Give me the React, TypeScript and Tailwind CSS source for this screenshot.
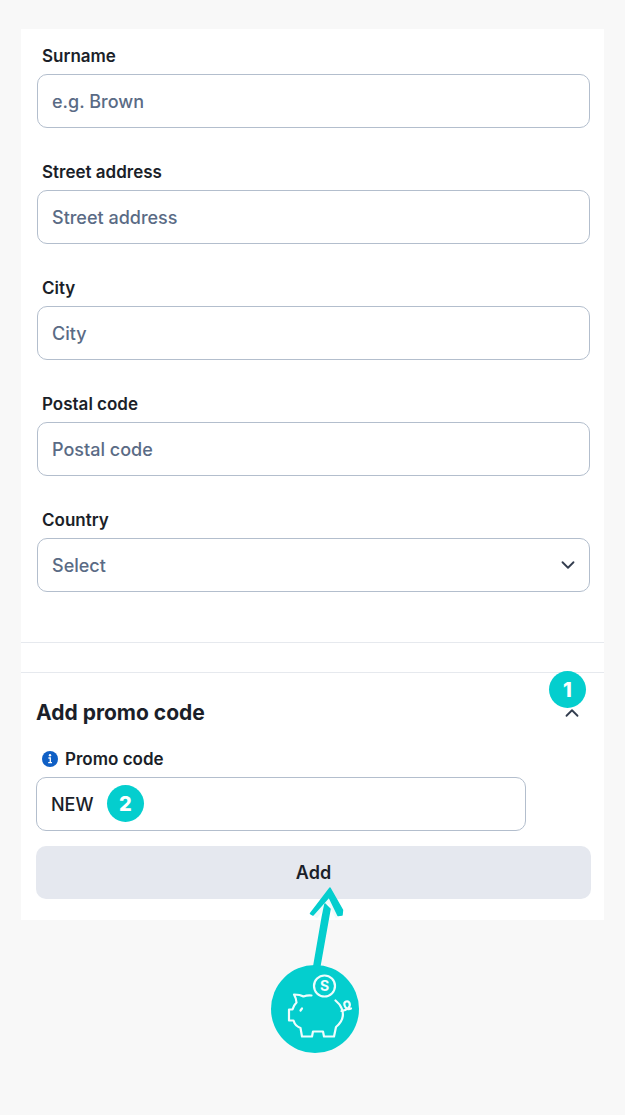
import { useState } from "react";
import { ChevronDown, ChevronUp } from "lucide-react";

const textFields = [
  { id: "surname", label: "Surname", placeholder: "e.g. Brown" },
  { id: "street", label: "Street address", placeholder: "Street address" },
  { id: "city", label: "City", placeholder: "City" },
  { id: "postal", label: "Postal code", placeholder: "Postal code" },
];

const labelClass = "block px-[5px] text-[17px] leading-6 font-semibold text-[#1b1f29]";
const controlClass =
  "block h-[54px] w-full rounded-[10px] border border-[#b3becd] bg-white px-3.5 text-[18px] font-medium outline-none";
const badgeClass =
  "absolute flex size-[37px] items-center justify-center rounded-full bg-[#04cece] text-[20px] font-extrabold text-white";

function InfoIcon() {
  return (
    <svg viewBox="0 0 16 16" className="size-4" aria-hidden="true">
      <circle cx="8" cy="8" r="8" fill="#0f5fc5" />
      <circle cx="8" cy="4.3" r="1.2" fill="#fff" />
      <path d="M6.4 7h1.9v4.4M6.2 11.6h3.8" stroke="#fff" strokeWidth="1.3" fill="none" />
    </svg>
  );
}

function PiggyPointer() {
  return (
    <svg viewBox="0 0 88 167" className="relative h-[167px] w-[88px]" role="img" aria-label="Save with a promo code">
      {/* Arrow */}
      <path d="M44 31 L57.500 13 L67 31" fill="none" stroke="#effbfb" strokeWidth="5" />
      <g fill="#04cece" stroke="#04cece" strokeWidth="1.5" strokeLinejoin="round">
        <path d="M59 2 L71.500 24 L71 29 L67 29.500 L58 11 L42 29 L39.500 27.500 Z" />
        <path d="M54 18 L59 23 L48.500 82 L42.500 82 L51.500 30 Z" />
      </g>
      <circle cx="44" cy="123" r="44" fill="#04cece" />
      {/* Pig and coin */}
      <g fill="none" stroke="#effdfd" strokeWidth="2.2" strokeLinecap="round" strokeLinejoin="round">
        <circle cx="53.500" cy="100" r="10.500" />
        <path d="M40.500 109.500c-3-.3-5.500 0-8 1-2.500-1.500-5.500-2-9.500-2 2 3.500 2.500 5.500 2.500 8-2 2-3.200 4-4 7h-3.500v11h4.500c1 3.500 3 6 7 7.500l1.500 8.500h10l1-5h10l1 5h10l2-9.500c6-5 8.500-12 5.500-19-1-2.500-3-5-6-7.500" />
        <path d="M70.500 125c6-1 9.500-4.500 8-8-1.500-3-6-1.500-5 2.200 1 3.500 4 4.800 6.500 3.300" />
        <path d="M29.500 124.500l1.500-2" />
      </g>
      <text x="53.500" y="105" textAnchor="middle" fill="#effdfd" fontSize="14" fontWeight="700">
        S
      </text>
    </svg>
  );
}

export default function App() {
  const [open, setOpen] = useState(true);
  const [promo, setPromo] = useState("NEW");

  return (
    <main className="min-h-screen bg-[#f8f8f8] px-[21px] pt-[29px] pb-[62px] font-['Inter',sans-serif] text-[#1b1f29]">
      <form className="bg-white" onSubmit={(e) => e.preventDefault()}>
        <div className="flex flex-col gap-8 border-b border-[#e6e9ee] pt-[15px] pr-[14px] pb-[50px] pl-4">
          {textFields.map((field) => (
            <div key={field.id} className="flex flex-col gap-1.5">
              <label htmlFor={field.id} className={labelClass}>
                {field.label}
              </label>
              <input
                id={field.id}
                type="text"
                placeholder={field.placeholder}
                className={`${controlClass} placeholder:text-[#5a6b85]`}
              />
            </div>
          ))}
          <div className="flex flex-col gap-1.5">
            <label htmlFor="country" className={labelClass}>
              Country
            </label>
            <div className="relative">
              <select id="country" defaultValue="" className={`${controlClass} appearance-none text-[#5a6b85]`}>
                <option value="">Select</option>
                <option value="uk">United Kingdom</option>
                <option value="ie">Ireland</option>
              </select>
              <ChevronDown className="pointer-events-none absolute top-4 right-[11px] size-[22px] text-[#333d4f]" />
            </div>
          </div>
        </div>

        <div className="h-[29px]" />

        <section className="border-t border-[#e6e9ee] pt-6 pr-[13px] pb-[21px] pl-[15px]">
          <div className="flex h-8 items-center justify-between">
            <h2 className="text-[21px] font-bold">Add promo code</h2>
            <button
              type="button"
              aria-label="Toggle promo code"
              aria-expanded={open}
              onClick={() => setOpen(!open)}
              className="relative mr-2"
            >
              <ChevronUp className="size-[22px] text-[#333d4f]" />
              <span className={`${badgeClass} right-[-3px] bottom-4`}>1</span>
            </button>
          </div>
          {open && (
            <div className="pt-[18px]">
              <div className="flex items-center gap-[7px] pl-1.5">
                <InfoIcon />
                <label htmlFor="promo" className="text-[17px] leading-6 font-semibold">
                  Promo code
                </label>
              </div>
              <div className="relative mt-1.5 mr-[65px]">
                <input
                  id="promo"
                  type="text"
                  value={promo}
                  onChange={(e) => setPromo(e.target.value)}
                  className={controlClass}
                />
                <span className={`${badgeClass} top-2 left-[71px]`}>2</span>
              </div>
              <button
                type="submit"
                className="mt-[15px] h-[53px] w-full rounded-[10px] bg-[#e5e8ef] text-[18px] font-semibold"
              >
                Add
              </button>
            </div>
          )}
        </section>
      </form>

      <div className="-mt-[34px] flex justify-center pl-1">
        <PiggyPointer />
      </div>
    </main>
  );
}
